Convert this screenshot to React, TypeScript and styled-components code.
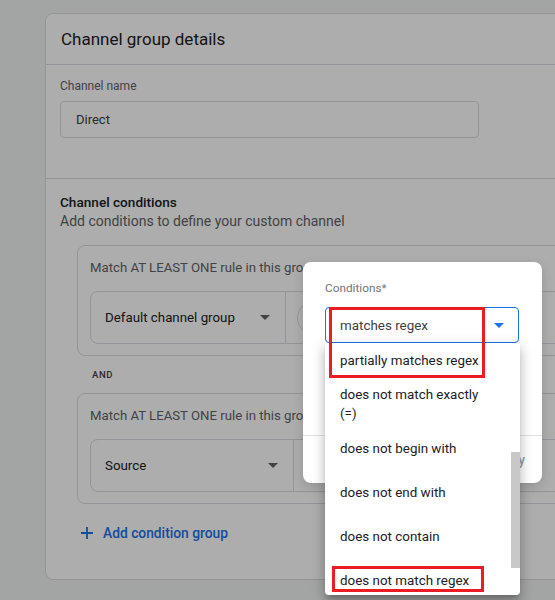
import React from "react";
import styled, { createGlobalStyle } from "styled-components";

const GlobalStyle = createGlobalStyle`
  html, body { margin: 0; padding: 0; background: #f1f3f4; overflow: hidden; }
  body { font-family: Roboto, "Liberation Sans", Arial, sans-serif; }
  * { box-sizing: border-box; }
`;

const Page = styled.div`
  position: relative;
  width: 555px;
  height: 600px;
  overflow: hidden;
  padding: 13px 0 0 45px;
`;

const Card = styled.section`
  width: 560px;
  height: 567px;
  background: #fff;
  border: 1px solid #dadce0;
  border-radius: 8px;
  display: flex;
  flex-direction: column;
`;

const CardHeader = styled.header`
  height: 51px;
  display: flex;
  align-items: center;
  padding: 0 15px;
  border-bottom: 1px solid #dadce0;
`;

const Title = styled.h2`
  margin: 0;
  font-size: 17px;
  font-weight: 400;
  color: #202124;
`;

const NameSection = styled.div`
  padding: 13px 14px 40px 14px;
  border-bottom: 1px solid #dadce0;
`;

const FieldLabel = styled.div`
  font-size: 12px;
  line-height: 16px;
  color: #5f6368;
`;

const TextBox = styled.div`
  margin-top: 7px;
  width: 419px;
  height: 37px;
  border: 1px solid #dadce0;
  border-radius: 4px;
  padding: 0 15px;
  display: flex;
  align-items: center;
  font-size: 13px;
  color: #3c4043;
`;

const ConditionsSection = styled.div`
  padding: 14px 0 0 14px;
`;

const Heading = styled.div`
  font-size: 13.6px;
  font-weight: 500;
  line-height: 19px;
  color: #202124;
`;

const Description = styled.div`
  font-size: 14px;
  line-height: 19px;
  color: #5f6368;
`;

const GroupList = styled.div`
  margin: 14px 0 0 17px;
  width: 520px;
  display: flex;
  flex-direction: column;
`;

const Group = styled.div`
  border: 1px solid #dadce0;
  border-radius: 8px;
  padding: 12px 12px 11px;
`;

const GroupTitle = styled.div`
  font-size: 13.2px;
  line-height: 20px;
  color: #5f6368;
  white-space: nowrap;
`;

const Row = styled.div`
  margin-top: 13px;
  height: 53px;
  border: 1px solid #dadce0;
  border-radius: 8px;
  display: flex;
  align-items: stretch;
`;

const SelectCell = styled.div<{ $w: number }>`
  width: ${(p) => p.$w}px;
  border-right: 1px solid #dadce0;
  padding: 0 15px 0 14px;
  display: flex;
  align-items: center;
  justify-content: space-between;
  font-size: 13.3px;
  color: #202124;
`;

const ValueCell = styled.div`
  padding-left: 11px;
  display: flex;
  align-items: center;
`;

const Circle = styled.div`
  width: 34px;
  height: 34px;
  border-radius: 50%;
  border: 1px solid #dadce0;
`;

const AndLabel = styled.div`
  margin: 12px 0 11px 15px;
  font-size: 9.5px;
  line-height: 14px;
  font-weight: 500;
  letter-spacing: 0.6px;
  color: #3c4043;
`;

const AddButton = styled.div`
  margin-top: 19px;
  padding-left: 4px;
  display: flex;
  align-items: center;
  gap: 10px;
  font-size: 13.8px;
  line-height: 20px;
  font-weight: 500;
  color: #1a73e8;
`;

const Scrim = styled.div`
  position: absolute;
  inset: 0;
  background: rgba(0, 0, 0, 0.32);
`;

const Dialog = styled.div`
  position: absolute;
  left: 303px;
  top: 262px;
  width: 239px;
  height: 221px;
  background: #fff;
  border-radius: 8px;
  box-shadow: 0 4px 12px rgba(0, 0, 0, 0.15);
  display: flex;
  flex-direction: column;
  overflow: hidden;
`;

const DialogBody = styled.div`
  height: 173px;
  padding: 18px 22px 0;
`;

const DialogLabel = styled.div`
  font-size: 11.8px;
  line-height: 16px;
  color: #757575;
`;

const ConditionSelect = styled.div`
  margin-top: 11px;
  width: 194px;
  height: 36px;
  border: 1px solid #1a73e8;
  border-radius: 4px;
  padding: 0 14px;
  display: flex;
  align-items: center;
  justify-content: space-between;
  font-size: 13.4px;
  color: #3c4043;
`;

const DialogFooter = styled.div`
  flex: 1;
  border-top: 1px solid #e0e0e0;
  display: flex;
  align-items: center;
  justify-content: flex-end;
  padding-right: 17px;
  font-size: 14px;
  font-weight: 500;
  color: #9aa0a6;
`;

const OptionList = styled.div`
  position: absolute;
  left: 325px;
  top: 343px;
  width: 194.5px;
  height: 252px;
  background: #fff;
  overflow: hidden;
  border-radius: 0 0 4px 4px;
  box-shadow: 0 5px 5px -3px rgba(0, 0, 0, 0.2), 0 8px 10px 1px rgba(0, 0, 0, 0.14),
    0 3px 14px 2px rgba(0, 0, 0, 0.12);
`;

const OptionScroll = styled.div`
  margin-top: -5px;
`;

const Option = styled.div`
  height: 44px;
  padding: 0 30px 0 15px;
  display: flex;
  align-items: center;
  font-size: 13.4px;
  line-height: 19px;
  color: #202124;
`;

const Thumb = styled.div`
  position: absolute;
  right: 0;
  top: 109px;
  width: 9px;
  height: 116px;
  background: #c8c8c8;
`;

const Highlight = styled.div<{ $x: number; $y: number; $w: number; $h: number }>`
  position: absolute;
  left: ${(p) => p.$x}px;
  top: ${(p) => p.$y}px;
  width: ${(p) => p.$w}px;
  height: ${(p) => p.$h}px;
  border: 3px solid #ec1c24;
`;

const Caret = ({ color }: { color: string }) => (
  <svg width="10" height="5" viewBox="0 0 10 5">
    <path d="M0 0h10L5 5z" fill={color} />
  </svg>
);

const Plus = () => (
  <svg width="12" height="12" viewBox="0 0 12 12">
    <path d="M6 0v12M0 6h12" stroke="#1a73e8" strokeWidth="1.8" fill="none" />
  </svg>
);

const options = [
  "partially matches regex",
  "does not match exactly (=)",
  "does not begin with",
  "does not end with",
  "does not contain",
  "does not match regex",
];

const groups = [
  { field: "Default channel group", w: 195 },
  { field: "Source", w: 203 },
];

export default function App() {
  return (
    <>
      <GlobalStyle />
      <Page>
        <Card>
          <CardHeader>
            <Title>Channel group details</Title>
          </CardHeader>
          <NameSection>
            <FieldLabel>Channel name</FieldLabel>
            <TextBox>Direct</TextBox>
          </NameSection>
          <ConditionsSection>
            <Heading>Channel conditions</Heading>
            <Description>Add conditions to define your custom channel</Description>
            <GroupList>
              {groups.map((g, i) => (
                <React.Fragment key={g.field}>
                  {i > 0 && <AndLabel>AND</AndLabel>}
                  <Group>
                    <GroupTitle>Match AT LEAST ONE rule in this group</GroupTitle>
                    <Row>
                      <SelectCell $w={g.w}>
                        <span>{g.field}</span>
                        <Caret color="#5f6368" />
                      </SelectCell>
                      <ValueCell>
                        <Circle />
                      </ValueCell>
                    </Row>
                  </Group>
                </React.Fragment>
              ))}
              <AddButton>
                <Plus />
                <span>Add condition group</span>
              </AddButton>
            </GroupList>
          </ConditionsSection>
        </Card>
        <Scrim />
        <Dialog>
          <DialogBody>
            <DialogLabel>Conditions*</DialogLabel>
            <ConditionSelect>
              <span>matches regex</span>
              <Caret color="#1a73e8" />
            </ConditionSelect>
          </DialogBody>
          <DialogFooter>Apply</DialogFooter>
        </Dialog>
        <OptionList>
          <OptionScroll>
            {options.map((o) => (
              <Option key={o}>{o}</Option>
            ))}
          </OptionScroll>
          <Thumb />
        </OptionList>
        <Highlight $x={328.5} $y={306.5} $w={156.5} $h={71} />
        <Highlight $x={331.5} $y={565.5} $w={152.5} $h={26} />
      </Page>
    </>
  );
}
